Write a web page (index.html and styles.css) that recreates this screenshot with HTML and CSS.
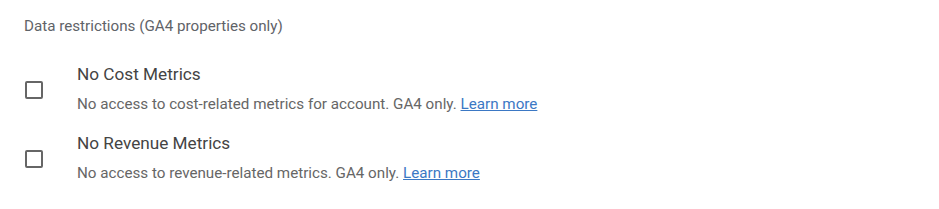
FILE: index.html
```html
<!DOCTYPE html>
<html lang="en">
<head>
    <meta charset="UTF-8">
    <title>Data restrictions</title>
    <link rel="stylesheet" href="styles.css">
</head>
<body>
    <div class="panel">
        <div class="panel-title">Data restrictions (GA4 properties only)</div>
        <label class="option">
            <span class="checkbox"></span>
            <span class="option-text">
                <span class="option-name">No Cost Metrics</span>
                <span class="option-desc">No access to cost-related metrics for account. GA4 only. <a href="#" class="link">Learn more</a></span>
            </span>
        </label>
        <label class="option">
            <span class="checkbox"></span>
            <span class="option-text">
                <span class="option-name">No Revenue Metrics</span>
                <span class="option-desc">No access to revenue-related metrics. GA4 only. <a href="#" class="link">Learn more</a></span>
            </span>
        </label>
    </div>
</body>
</html>
```
FILE: styles.css
```css
body {
    margin: 0;
    background-color: #ffffff;
    font-family: Roboto, 'Liberation Sans', sans-serif;
    color: #444444;
}

.panel {
    padding: 16px 24px 0 24px;
}

.panel-title {
    font-size: 15.2px;
    line-height: 20px;
    color: #5f6368;
    margin-bottom: 26px;
}

.option {
    display: flex;
    align-items: center;
    margin-bottom: 17px;
    cursor: pointer;
}

.checkbox {
    width: 14px;
    height: 14px;
    border: 2px solid #666666;
    border-radius: 2px;
    margin-left: 1px;
    margin-right: 34px;
    margin-top: 4px;
    flex-shrink: 0;
}

.option-text {
    display: flex;
    flex-direction: column;
}

.option-name {
    font-size: 17.2px;
    line-height: 24px;
    color: #444444;
    margin-bottom: 8px;
}

.option-desc {
    font-size: 15.2px;
    line-height: 20px;
    color: #666666;
}

.link {
    color: #3b78c4;
    text-decoration: underline;
}
```
